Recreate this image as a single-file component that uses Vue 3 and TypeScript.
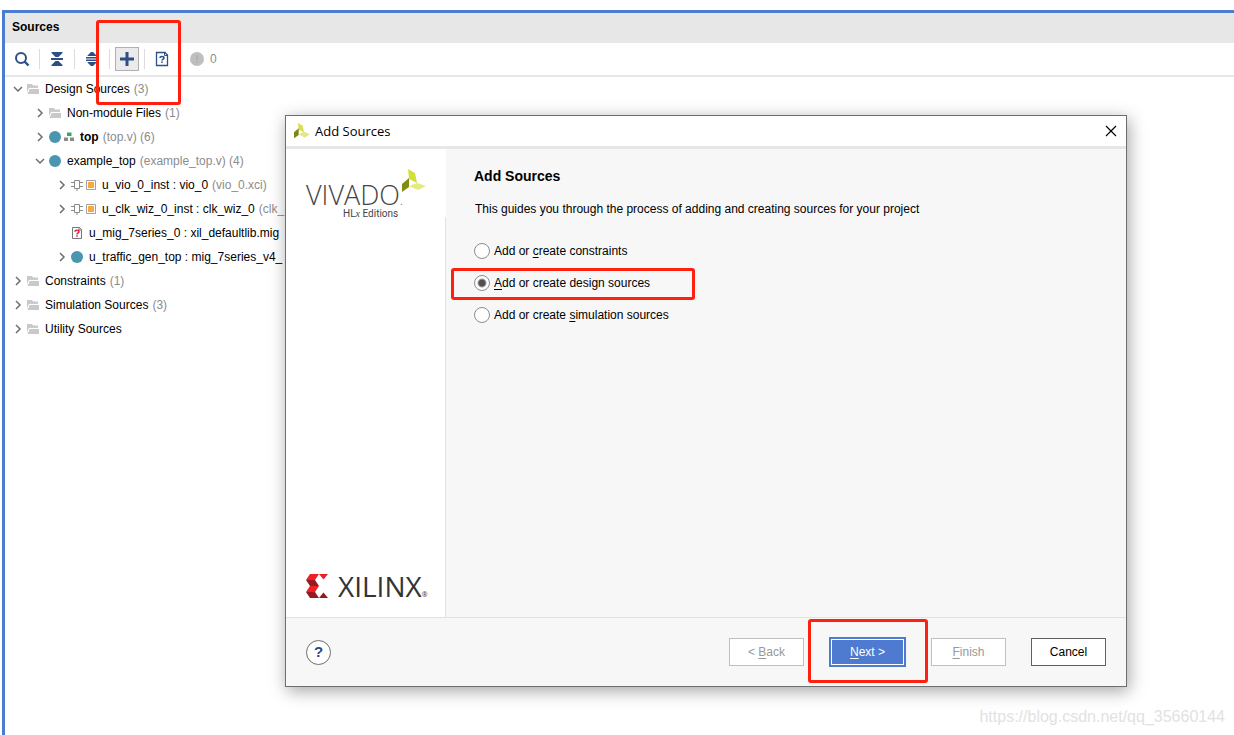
<script setup lang="ts">
import { ref } from 'vue'

type Icon = 'folder' | 'module' | 'hierarchy' | 'chip' | 'ip' | 'missing'

interface TreeRow {
  level: number
  state: 'open' | 'closed' | 'leaf'
  icons: Icon[]
  label: string
  note?: string
  bold?: boolean
}

const rows: TreeRow[] = [
  { level: 0, state: 'open', icons: ['folder'], label: 'Design Sources', note: '(3)' },
  { level: 1, state: 'closed', icons: ['folder'], label: 'Non-module Files', note: '(1)' },
  { level: 1, state: 'closed', icons: ['module', 'hierarchy'], label: 'top', note: '(top.v) (6)', bold: true },
  { level: 1, state: 'open', icons: ['module'], label: 'example_top', note: '(example_top.v) (4)' },
  { level: 2, state: 'closed', icons: ['chip', 'ip'], label: 'u_vio_0_inst : vio_0', note: '(vio_0.xci)' },
  { level: 2, state: 'closed', icons: ['chip', 'ip'], label: 'u_clk_wiz_0_inst : clk_wiz_0', note: '(clk_' },
  { level: 2, state: 'leaf', icons: ['missing'], label: 'u_mig_7series_0 : xil_defaultlib.mig' },
  { level: 2, state: 'closed', icons: ['module'], label: 'u_traffic_gen_top : mig_7series_v4_' },
  { level: 0, state: 'closed', icons: ['folder'], label: 'Constraints', note: '(1)' },
  { level: 0, state: 'closed', icons: ['folder'], label: 'Simulation Sources', note: '(3)' },
  { level: 0, state: 'closed', icons: ['folder'], label: 'Utility Sources' },
]

const options = [
  { id: 'constraints', before: 'Add or ', key: 'c', after: 'reate constraints' },
  { id: 'design', before: '', key: 'A', after: 'dd or create design sources' },
  { id: 'simulation', before: 'Add or create ', key: 's', after: 'imulation sources' },
]
const choice = ref('design')
</script>

<template>
  <main class="desktop">
    <section class="panel">
      <h1 class="panel-title">Sources</h1>
      <div class="toolbar">
        <button class="tool" aria-label="Search">
          <svg width="16" height="16" viewBox="0 0 16 16" fill="none" stroke="#2d4f85">
            <circle cx="7" cy="7" r="5" stroke-width="2" />
            <path d="M10.5 10.5L14.5 14.5" stroke-width="2.4" />
          </svg>
        </button>
        <i class="rule"></i>
        <button class="tool" aria-label="Collapse all">
          <svg width="16" height="16" viewBox="0 0 16 16" fill="#2d4f85">
            <path d="M2.500 1h11v1L9.500 6h-3l-4-4zM2 7h12v2H2zM6.500 10h3l4 4v1h-11v-1z" />
          </svg>
        </button>
        <i class="rule"></i>
        <button class="tool" aria-label="Expand all">
          <svg width="16" height="16" viewBox="0 0 16 16" fill="#2d4f85">
            <path d="M7 1h2l3.500 3.500V5h-9v-.5zM2 6h12v1.500H2zM2 8.500h12V10H2zM3.500 11h9v.5L9 15H7l-3.500-3.500z" />
          </svg>
        </button>
        <i class="rule"></i>
        <div class="marked">
          <button class="tool active" aria-label="Add sources">
            <svg width="16" height="16" viewBox="0 0 16 16" fill="#2d4f85">
              <path d="M6.500 1h3v5.500H15v3H9.500V15h-3V9.500H1v-3h5.500z" />
            </svg>
          </button>
          <span class="mark mark-add"></span>
        </div>
        <i class="rule"></i>
        <button class="tool" aria-label="Missing sources">
          <svg width="16" height="16" viewBox="0 0 16 16" fill="none" stroke="#2d4f85">
            <path d="M2.500 1.500h8.500l2.500 2.500v10.500h-11z" stroke-width="1.300" />
            <path d="M10.500 1.500v3h3" />
            <path d="M6 7c0-2 4-2 4 0 0 1.300-2 1.200-2 2.600M8 10.600v1.500" stroke-width="1.500" />
          </svg>
        </button>
        <span class="messages">
          <svg width="14" height="14" viewBox="0 0 14 14">
            <circle cx="7" cy="7" r="7" fill="#bfbfbf" />
            <path d="M7 3v5M7 9.500v1.500" stroke="#b2b2b2" stroke-width="2" />
          </svg>
          0
        </span>
      </div>

      <ul class="tree">
        <li v-for="row in rows" :key="row.label" :class="['row', 'level-' + row.level]">
          <svg class="chevron" width="12" height="12" viewBox="0 0 12 12" fill="none" stroke="#6e6e6e" stroke-width="1.500">
            <path v-if="row.state === 'open'" d="M2 4l4 4 4-4" />
            <path v-else-if="row.state === 'closed'" d="M4 2l4 4-4 4" />
          </svg>
          <span class="icons">
            <template v-for="icon in row.icons" :key="icon">
              <svg v-if="icon === 'folder'" width="12" height="12" viewBox="0 0 12 12">
                <path d="M0 1h5l1 1.500h5V5H2.500L0 10z" fill="#c9c9c9" />
                <path d="M2.500 6H12v5H0.500z" fill="#c9c9c9" />
                <path d="M.5 9.500L2.200 5.400H11" stroke="#fff" fill="none" />
              </svg>
              <svg v-else-if="icon === 'module'" width="12" height="12" viewBox="0 0 12 12">
                <circle cx="6" cy="6" r="6" fill="#4996ae" />
              </svg>
              <svg v-else-if="icon === 'hierarchy'" width="10" height="12" viewBox="0 0 10 12">
                <path d="M3 1.500h4.500V5H3z" fill="#2fae57" />
                <path d="M0 6.500h4V10H0zM6 6.500h4V10H6z" fill="#8a8a8a" />
              </svg>
              <svg v-else-if="icon === 'chip'" width="12" height="12" viewBox="0 0 12 12" fill="none" stroke="#8a8a8a">
                <path d="M3.500 1.500h5v8h-5zM0 3.500h3M0 7.500h3M9 3.500h3M9 7.500h3M6 10v2" />
              </svg>
              <svg v-else-if="icon === 'ip'" width="10" height="12" viewBox="0 0 10 12">
                <path d="M.5 1.500h9v9h-9z" fill="#fff" stroke="#a2a2a2" />
                <path d="M2 3h6v6H2z" fill="#ffa63d" />
              </svg>
              <svg v-else width="12" height="12" viewBox="0 0 12 12" fill="none">
                <path d="M1.500.5h7l2 2v9h-9z" stroke="#777" />
                <path d="M8 .5V3h2.500" stroke="#777" />
                <path d="M4 4.800c0-2 4-2 4 0 0 1.200-2 1.200-2 2.700M6 8.300v1.400" stroke="#e0234a" stroke-width="1.500" />
              </svg>
            </template>
          </span>
          <b v-if="row.bold">{{ row.label }}</b>
          <span v-else>{{ row.label }}</span>
          <span v-if="row.note" class="note">{{ row.note }}</span>
        </li>
      </ul>
    </section>

    <section class="dialog" role="dialog" aria-labelledby="dialog-name">
      <header class="titlebar">
        <svg width="16" height="16" viewBox="0 0 24 24">
          <path d="M6 0l7 4 2 10-8-4z" fill="#d9de50" />
          <path d="M0 14l7-6v10l-7 5z" fill="#838310" />
          <path d="M7 17l8-4 9 4-8 5z" fill="#e3e88c" />
        </svg>
        <span id="dialog-name">Add Sources</span>
        <button class="close" aria-label="Close">
          <svg width="12" height="12" viewBox="0 0 12 12" stroke="#000" stroke-width="1.200">
            <path d="M1 1l10 10M11 1L1 11" />
          </svg>
        </button>
      </header>

      <div class="body">
        <aside class="side">
          <div class="vivado">
            <span class="vivado-word">VIVADO<small>.</small></span>
            <svg class="vivado-leaf" width="24" height="24" viewBox="0 0 24 24">
              <path d="M6 0l7 4 2 10-8-4z" fill="#d4df3a" />
              <path d="M0 15l7-6v9l-7 5z" fill="#858a12" />
              <path d="M7 17l8-3 9 3-8 4z" fill="#e4ea7d" />
            </svg>
            <span class="vivado-sub">HL<i>x</i> Editions</span>
          </div>
          <div class="side-fill">
            <div class="xilinx">
              <svg width="22" height="24" viewBox="0 0 22 24">
                <path d="M4 0h9L9 6H0z" fill="#ed2028" />
                <path d="M0 6h9l4 6H4z" fill="#99191f" />
                <path d="M4 12h9l-4 6H0z" fill="#ed2028" />
                <path d="M0 18h9l4 6H4z" fill="#99191f" />
                <path d="M13 0h9l-4.500 5.500z" fill="#ed2028" />
                <path d="M17.500 18.500L22 24h-9z" fill="#99191f" />
              </svg>
              <span class="xilinx-word">XILINX<small>®</small></span>
            </div>
          </div>
        </aside>

        <div class="content">
          <h2>Add Sources</h2>
          <p>This guides you through the process of adding and creating sources for your project</p>
          <div class="options">
            <div v-for="o in options" :key="o.id" class="marked option">
              <input :id="o.id" v-model="choice" type="radio" name="kind" :value="o.id" />
              <label :for="o.id">{{ o.before }}<u>{{ o.key }}</u>{{ o.after }}</label>
              <span v-if="o.id === 'design'" class="mark mark-option"></span>
            </div>
          </div>
        </div>
      </div>

      <footer class="footer">
        <button class="help" aria-label="Help">?</button>
        <div class="actions">
          <button class="btn" disabled><span>&lt; <u>B</u>ack</span></button>
          <div class="marked">
            <button class="btn next"><span><u>N</u>ext &gt;</span></button>
            <span class="mark mark-next"></span>
          </div>
          <button class="btn" disabled><span><u>F</u>inish</span></button>
          <button class="btn">Cancel</button>
        </div>
      </footer>
    </section>

    <span class="watermark">https://blog.csdn.net/qq_35660144</span>
  </main>
</template>

<style>
body {
  background: #fff;
}
</style>

<style scoped>
.desktop {
  position: relative;
  box-sizing: border-box;
  min-height: 100vh;
  padding: 10px 0 0 2px;
  display: flex;
  overflow: hidden;
  font: 12px/16px "Liberation Sans", Arial, sans-serif;
  color: #000;
}
button {
  font: inherit;
  color: inherit;
  padding: 0;
}
svg {
  display: block;
  flex: none;
}
.panel {
  flex: 1;
  border: solid #4a7dcf;
  border-width: 3px 0 0 3px;
}
.panel-title {
  margin: 0;
  padding: 6px 7px 8px;
  background: #e7e7e7;
  font-size: 12px;
  line-height: 16px;
}
.toolbar {
  display: flex;
  align-items: center;
  height: 32px;
  padding-left: 5px;
  border-bottom: 2px solid #e7e7e7;
}
.tool {
  display: flex;
  align-items: center;
  justify-content: center;
  box-sizing: border-box;
  width: 24px;
  height: 24px;
  border: 0;
  background: none;
}
.tool.active {
  border: 1px solid #b0b0b0;
  background: #ebebeb;
}
.rule {
  width: 1px;
  height: 20px;
  margin: 0 5px;
  background: #dcdcdc;
}
.messages {
  display: flex;
  align-items: center;
  gap: 6px;
  margin-left: 16px;
  color: #8c8c8c;
}
.marked {
  position: relative;
}
.mark {
  position: absolute;
  border: 3px solid #ff2010;
  border-radius: 3px;
  pointer-events: none;
}
.mark-add {
  inset: -27px -42px -34px -19px;
}
.tree {
  list-style: none;
  margin: 0;
  padding: 0;
}
.row {
  display: flex;
  align-items: center;
  height: 24px;
  padding-left: 7px;
  white-space: nowrap;
}
.level-1 {
  padding-left: 29px;
}
.level-2 {
  padding-left: 51px;
}
.chevron {
  margin-right: 3px;
}
.icons {
  display: flex;
  gap: 3px;
  margin-right: 6px;
}
.note {
  margin-left: 4px;
  color: #8c8c8c;
}
.dialog {
  position: absolute;
  top: 115px;
  left: 285px;
  right: 107px;
  border: 1px solid #6e6e6e;
  background: #f7f7f7;
  box-shadow: 2px 4px 16px rgba(0, 0, 0, 0.36);
}
.titlebar {
  display: flex;
  align-items: center;
  gap: 5px;
  height: 30px;
  padding: 0 9px 0 8px;
  border-bottom: 3px solid #e7e7e7;
  background: #fff;
  font: 13px/16px "Open Sans", "Noto Sans", sans-serif;
}
.close {
  margin-left: auto;
  border: 0;
  background: none;
}
.body {
  display: flex;
  min-height: 468px;
}
.side {
  display: flex;
  flex-direction: column;
  width: 160px;
  background: #fff;
}
.vivado {
  position: relative;
  box-sizing: border-box;
  height: 68px;
  padding: 33px 0 0 20px;
}
.vivado-word {
  display: block;
  font: 350 27px/26px "Open Sans", sans-serif;
  color: #444;
}
.vivado-word small {
  font-size: 12px;
  line-height: 0;
}
.vivado-leaf {
  position: absolute;
  top: 20px;
  left: 116px;
}
.vivado-sub {
  display: block;
  margin-left: 37px;
  font: 10px/12px Roboto, sans-serif;
  color: #444;
}
.vivado-sub i {
  font-family: "Liberation Serif", serif;
}
.side-fill {
  flex: 1;
  display: flex;
  align-items: flex-end;
  border-right: 1px solid #e2e2e2;
}
.xilinx {
  display: flex;
  align-items: center;
  gap: 10px;
  padding: 0 0 19px 20px;
}
.xilinx-word {
  font: 28px/24px "Open Sans", sans-serif;
  color: #333;
}
.xilinx-word small {
  font-size: 7px;
  line-height: 0;
}
.content {
  flex: 1;
  padding: 19px 28px;
}
.content h2 {
  margin: 0;
  font-size: 14px;
  line-height: 16px;
}
.content p {
  margin: 17px 0 0 1px;
}
.options {
  display: flex;
  flex-direction: column;
  align-items: flex-start;
  gap: 16px;
  margin-top: 26px;
}
.option {
  display: flex;
  align-items: center;
  gap: 4px;
}
.option input {
  appearance: none;
  box-sizing: border-box;
  width: 16px;
  height: 16px;
  margin: 0;
  border: 1px solid #8c8c8c;
  border-radius: 50%;
  background: #fff;
}
.option input:checked {
  background: radial-gradient(circle, #505050 3px, #fff 5px);
}
.mark-option {
  inset: -7px -45px -9px -23px;
}
u {
  text-underline-offset: 2px;
}
.footer {
  display: flex;
  align-items: center;
  justify-content: space-between;
  height: 68px;
  padding: 0 20px;
  border-top: 1px solid #e2e2e2;
}
.help {
  width: 25px;
  height: 25px;
  border: 1px solid #6e6e6e;
  border-radius: 50%;
  background: #fff;
  color: #2b4a86;
  font-size: 15px;
  font-weight: bold;
}
.actions {
  display: flex;
  align-items: center;
  gap: 25px;
}
.btn {
  display: block;
  box-sizing: border-box;
  width: 75px;
  height: 28px;
  border: 1px solid #606060;
  background: #fff;
}
.btn:disabled {
  border-color: #c0c0c0;
  color: #999;
}
.btn.next {
  width: 77px;
  height: 30px;
  border: 2px solid #4e7bd0;
  background: #4e7bd0;
  box-shadow: inset 0 0 0 1px #fff;
  color: #fff;
}
.mark-next {
  inset: -18px -22px -16px -21px;
}
.watermark {
  position: absolute;
  right: 9px;
  bottom: 8px;
  font-size: 16px;
  line-height: 20px;
  color: #e2e2e2;
}
</style>
